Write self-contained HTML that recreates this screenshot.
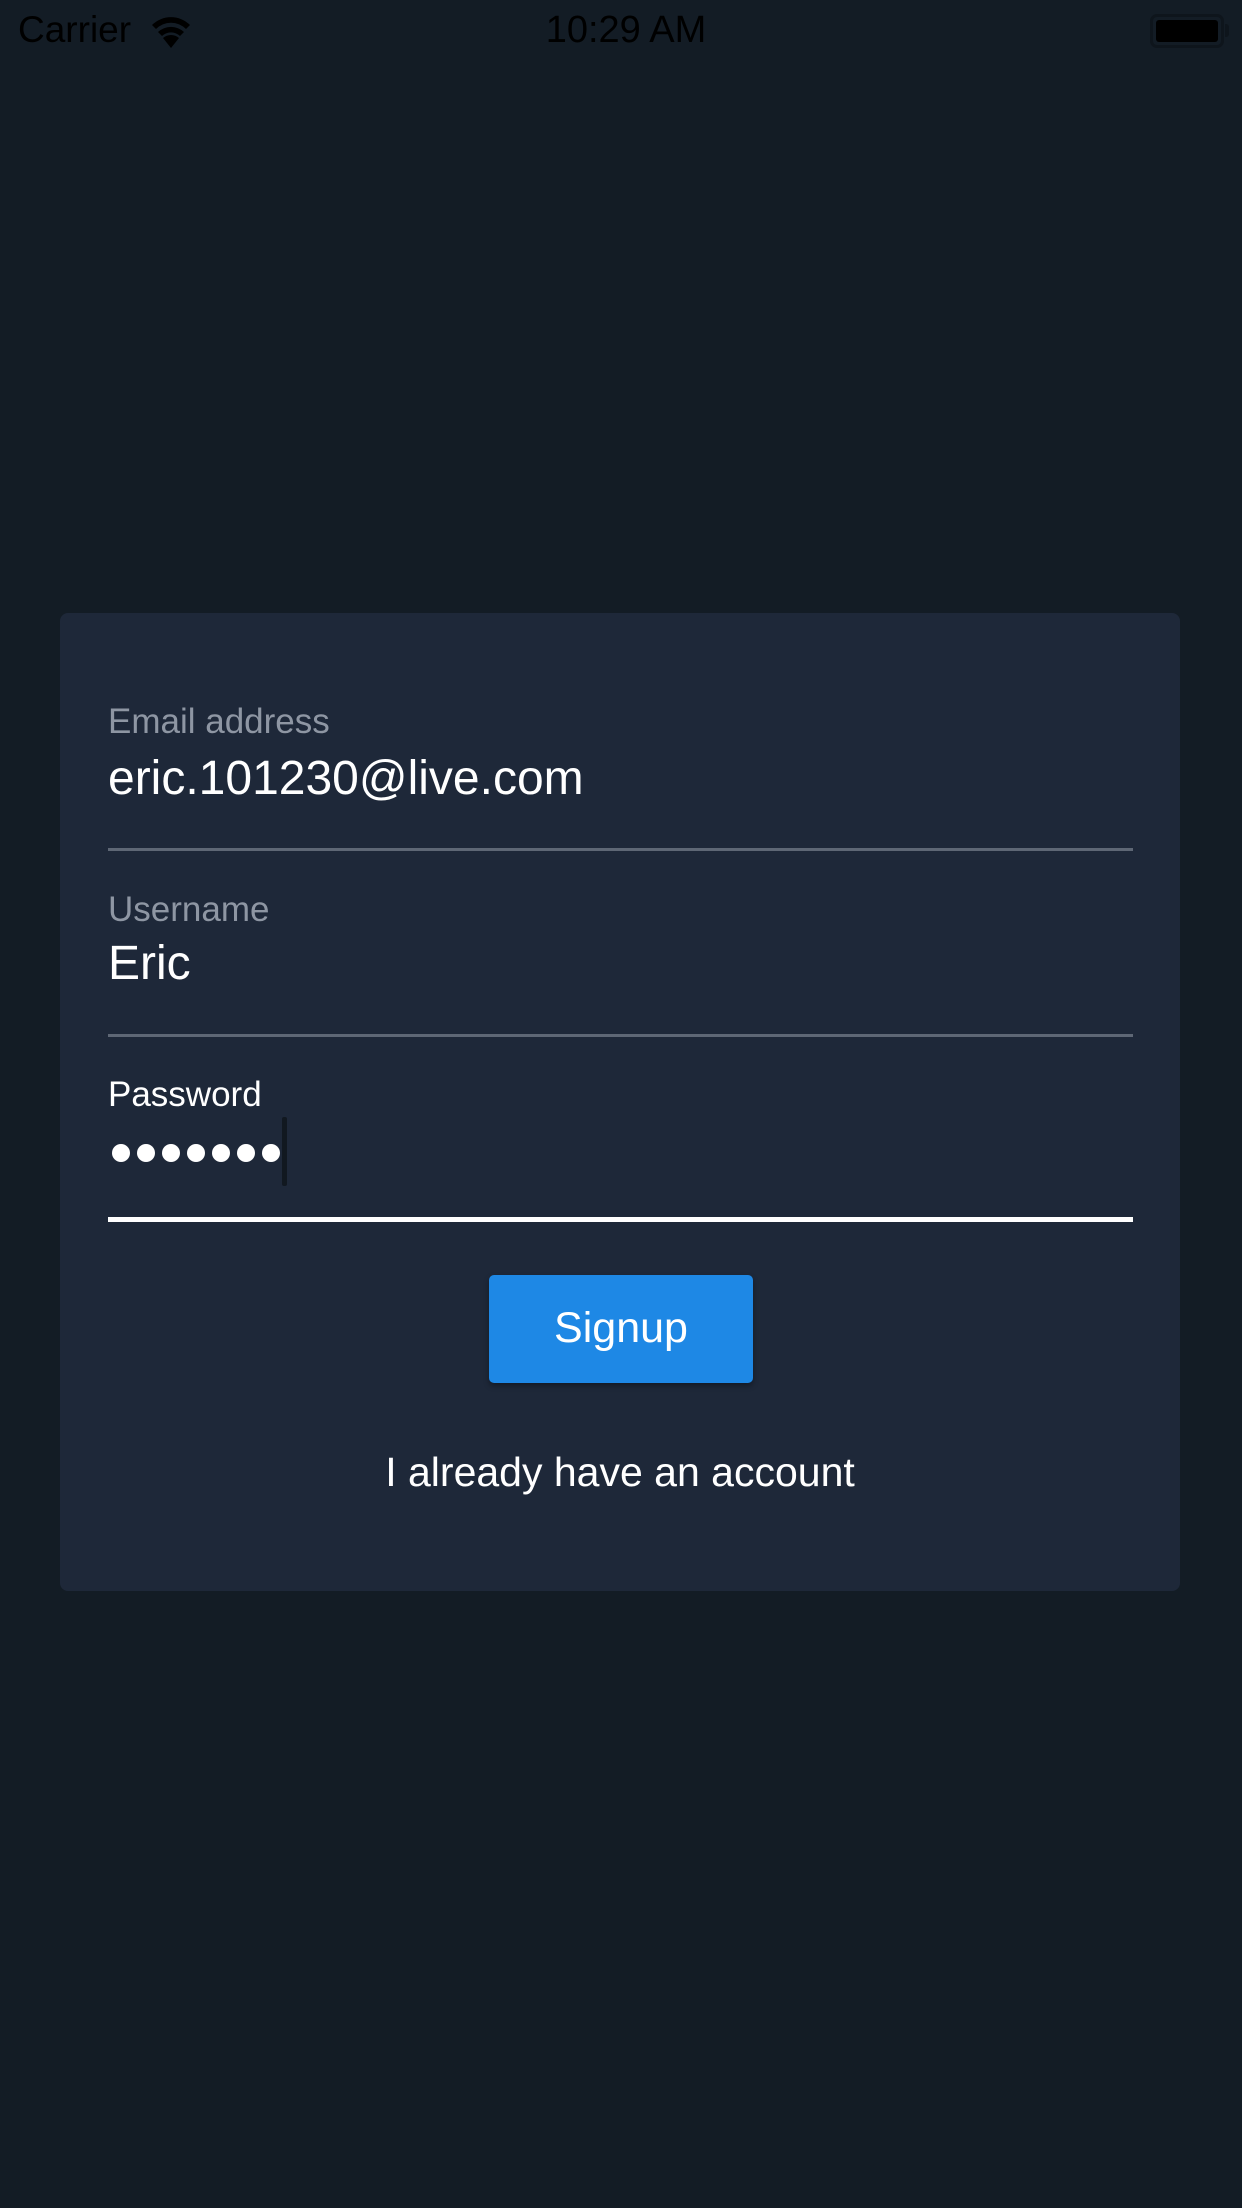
<!DOCTYPE html>
<html><head><meta charset="utf-8"><style>
*{margin:0;padding:0;box-sizing:border-box}
body{width:1242px;height:2208px;background:#131c25;position:relative;overflow:hidden;font-family:"Liberation Sans",sans-serif}
.a{position:absolute;white-space:nowrap}
.card{position:absolute;left:60px;top:613px;width:1120px;height:978px;background:#1e2839;border-radius:8px}
.lbl{font-size:35px;line-height:35px;color:#8e96a3;left:108px}
.val{font-size:48px;line-height:48px;color:#fff;left:108px}
.line{position:absolute;left:108px;width:1025px;height:3px;background:#5e6775}
.dot{position:absolute;width:18px;height:18px;border-radius:50%;background:#fff;top:1144px}
</style></head><body>
<div class="a" style="left:18px;top:10px;font-size:37px;line-height:40px;color:#000">Carrier</div>
<svg class="a" style="left:150px;top:14px" width="42" height="34" viewBox="0 0 42 34"><path d="M21 34 L13 24 A12 12 0 0 1 29 24 Z" fill="#000"/><path d="M8 18 A19 19 0 0 1 34 18 L30 22 A13 13 0 0 0 12 22 Z" fill="#000"/><path d="M2 11 A27 27 0 0 1 40 11 L36 15 A21 21 0 0 0 6 15 Z" fill="#000"/></svg>
<div class="a" style="left:0;width:1252px;text-align:center;top:10px;font-size:38px;line-height:40px;color:#000">10:29 AM</div>
<div class="a" style="left:1150px;top:14px;width:74px;height:34px;border:3px solid #0e151c;border-radius:7px;padding:3px"><div style="width:100%;height:100%;background:#000;border-radius:3px"></div></div>
<div class="a" style="left:1225px;top:24px;width:4px;height:13px;background:#0e151c;border-radius:0 3px 3px 0"></div>
<div class="card"></div>
<div class="a lbl" style="top:704px">Email address</div>
<div class="a val" style="top:755px">eric.101230@live.com</div>
<div class="line" style="top:848px"></div>
<div class="a lbl" style="top:892px">Username</div>
<div class="a val" style="top:940px">Eric</div>
<div class="line" style="top:1034px"></div>
<div class="a lbl" style="top:1077px;color:#fff">Password</div>
<div class="dot" style="left:112px"></div><div class="dot" style="left:137px"></div><div class="dot" style="left:162px"></div><div class="dot" style="left:187px"></div><div class="dot" style="left:212px"></div><div class="dot" style="left:237px"></div><div class="dot" style="left:262px"></div>
<div class="a" style="left:282px;top:1117px;width:5px;height:69px;background:#111820;border-radius:2px"></div>
<div class="a" style="left:108px;top:1217px;width:1025px;height:5px;background:#fff"></div>
<div class="a" style="left:489px;top:1275px;width:264px;height:108px;background:#1e88e5;border-radius:5px;box-shadow:0 3px 6px rgba(0,0,0,.35)"></div>
<div class="a" style="left:489px;width:264px;text-align:center;top:1307px;font-size:43px;line-height:43px;color:#fff">Signup</div>
<div class="a" style="left:60px;width:1120px;text-align:center;top:1452px;font-size:41px;line-height:41px;color:#fff">I already have an account</div>
</body></html>
